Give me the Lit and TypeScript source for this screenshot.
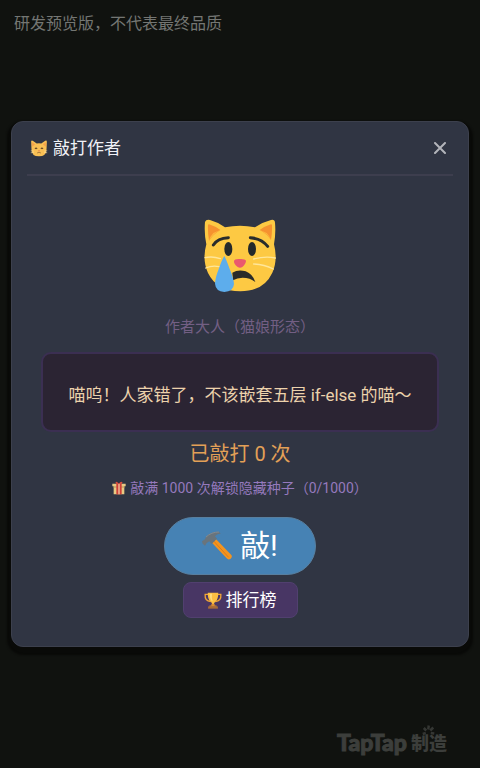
import { LitElement, html, css, svg } from "lit";
import { customElement, state } from "lit/decorators.js";

const GOAL = 1000;

const catIcon = html`<svg class="icon-cat" viewBox="0 0 54 52" aria-hidden="true">
  <path d="M3 3Q5 0 9 3L20 11Q27 9 34 11L46 2Q51 0 51 5L50 29Q49 50 27 50Q4 50 4 28Z" fill="#f9c055"/>
  <path d="M6 7L15 13L6 21ZM48 7L39 13L48 21Z" fill="#f5a04a"/>
  <path d="M15 27Q18 23 21 27M33 27Q36 23 39 27" fill="none" stroke="#6b4a24" stroke-width="4"/>
  <path d="M24 32H30L27 36Z" fill="#e0604e"/>
  <path d="M21 39Q24 41 27 37Q30 41 33 39" fill="none" stroke="#8a6230" stroke-width="2"/>
  <path d="M2 33L11 34M2 39L11 38M52 33L43 34M52 39L43 38" stroke="#ffe3a0" stroke-width="2"/>
</svg>`;

const cryingCat = html`<svg class="face" viewBox="42 40 216 222" role="img" aria-label="哭泣的猫">
  <path d="M45 49Q48 40 60 43Q83 49 105 65Q150 56 195 65Q218 49 243 43Q254 40 255 51Q258 83 252 116Q264 164 247 201Q221 257 151 257Q81 257 54 202Q36 163 49 116Q42 83 45 49Z" fill="#fdc943"/>
  <path d="M54 58Q55 54 61 57Q78 62 91 73Q70 85 57 105Q53 81 54 58ZM246 58Q245 54 239 57Q222 62 209 73Q232 85 243 103Q247 81 246 58Z" fill="#f5922f"/>
  <path d="M70 82L90 73Q70 85 57 105Q60 92 70 82ZM230 82L210 73Q232 85 243 103Q240 92 230 82Z" fill="#fdb63d"/>
  <path d="M70 118Q83 97 115 96M181 96Q215 99 233 122" fill="none" stroke="#292c2c" stroke-width="9" stroke-linecap="round"/>
  <ellipse cx="115" cy="130" rx="12" ry="21" fill="#24292b"/>
  <ellipse cx="186" cy="130" rx="12" ry="21" fill="#24292b"/>
  <path d="M132 166Q133 159 149 160Q165 159 168 165Q168 174 157 184Q150 189 143 184Q131 175 132 166Z" fill="#ea596e"/>
  <path d="M45 156Q68 151 91 159M47 187Q67 178 88 183M191 160Q226 151 256 157M191 175Q223 177 250 190" fill="none" stroke="#ffe69a" stroke-width="4" stroke-linecap="round"/>
  <path d="M127 201Q145 190 167 197Q188 205 196 229Q180 216 158 216Q141 216 129 224Z" fill="#292b29"/>
  <path d="M103 151Q110 164 119 190Q131 218 132 235Q130 258 103 259Q77 257 75 234Q76 215 86 191Q95 163 103 151Z" fill="#5dadec"/>
</svg>`;

const giftIcon = html`<svg class="icon-gift" viewBox="0 0 42 40" aria-hidden="true">
  <path d="M1 7H41V15H37V39H5V15H1Z" fill="#e8ca83"/>
  <path d="M5 15H37V19H5Z" fill="#c9a263"/>
  <path d="M13 7H29V39H13Z" fill="#cf4038"/>
  <path d="M19 8H23V39H19Z" fill="#f3c9a0"/>
  <path d="M20 8Q9 9 11 3Q14-2 20 7Q28-2 31 3Q33 9 20 8Z" fill="#dc5040"/>
</svg>`;

const hammerIcon = html`<svg class="icon-hammer" viewBox="0 0 90 90" aria-hidden="true">
  <path d="M27 32L38 20L88 72Q92 78 86 83Q79 88 74 82Z" fill="#f4941f"/>
  <path d="M34 29L80 79" stroke="#d97d1b" stroke-width="3"/>
  <path d="M2 38L0 31L9 25L12 17Q28 1 51 2L56 8Q43 9 39 16L45 23L29 39L22 31L14 36L9 44Z" fill="#69747c"/>
  <path d="M12 18Q28 3 51 3" fill="none" stroke="#818a91" stroke-width="3"/>
</svg>`;

const trophyIcon = html`<svg class="icon-trophy" viewBox="0 0 54 52" aria-hidden="true">
  <path d="M13 7H3Q1 28 20 29M41 7H51Q53 28 34 29" fill="none" stroke="#f0a436" stroke-width="4"/>
  <path d="M11 2H43Q43 23 35 29Q29 32 29 42H25Q25 32 19 29Q11 23 11 2Z" fill="#fcbf43"/>
  <path d="M17 5H24Q22 17 26 29Q17 24 17 5Z" fill="#ffdc7c"/>
  <path d="M22 36H32V41H38V45H16V41H22Z" fill="#d98c31"/>
  <path d="M12 44H42V51H12Z" fill="#a96b36"/>
</svg>`;

const rays = [
  [12, 9, 13, 1],
  [16, 11, 22, 5],
  [8, 11, 3, 6],
  [17, 16, 24, 17],
  [7, 16, 1, 18],
];

@customElement("app-root")
export class AppRoot extends LitElement {
  static styles = css`
    :host {
      display: block;
      color: #f0f1f6;
      font-family: Roboto, "Noto Sans CJK SC", sans-serif;
    }
    * {
      box-sizing: border-box;
    }
    .screen {
      min-height: 100vh;
      display: grid;
      grid-template-rows: 1fr auto 1fr;
      padding: 0 11px;
      background: #10120f;
    }
    .notice {
      margin: 0;
      padding: 12px 3px;
      font-size: 16px;
      line-height: 24px;
      color: #747673;
    }
    .card {
      padding: 0 15px 28px;
      border: 1px solid #3c404d;
      border-radius: 12px;
      background: #303543;
      box-shadow: 0 4px 2px 4px #090a08;
    }
    .header {
      display: flex;
      align-items: center;
      justify-content: space-between;
      height: 54px;
      border-bottom: 2px solid #3d3e4e;
      padding: 0 3px;
    }
    h1 {
      display: flex;
      align-items: center;
      gap: 5px;
      margin: 0;
      font-size: 17px;
      line-height: 24px;
      font-weight: 400;
    }
    button {
      font-family: inherit;
      cursor: pointer;
    }
    svg {
      display: block;
      flex: none;
    }
    .icon-cat,
    .icon-trophy {
      width: 18px;
      height: 17px;
    }
    .close {
      padding: 4px;
      border: 0;
      background: none;
    }
    .close svg {
      width: 12px;
      height: 12px;
    }
    .body {
      display: flex;
      flex-direction: column;
      align-items: center;
      padding: 43px 14px 0;
    }
    .face {
      width: 72px;
      height: 74px;
    }
    p {
      margin: 0;
    }
    .name {
      margin-top: 22px;
      font-size: 15px;
      line-height: 24px;
      color: #735f84;
    }
    .speech {
      align-self: stretch;
      margin-top: 13px;
      padding: 29px 8px 23px;
      border: 2px solid #3b2f52;
      border-radius: 10px;
      background: #2b2433;
      font-size: 17px;
      line-height: 24px;
      text-align: center;
      color: #ecd2ac;
    }
    .count {
      margin-top: 8px;
      font-size: 20px;
      line-height: 28px;
      color: #e3a057;
    }
    .hint {
      display: flex;
      align-items: center;
      gap: 4px;
      margin-top: 8px;
      font-size: 14px;
      line-height: 24px;
      color: #9579bd;
    }
    .icon-gift {
      width: 14px;
      height: 14px;
    }
    .hit {
      display: flex;
      align-items: center;
      gap: 8px;
      margin-top: 17px;
      height: 58px;
      padding: 0 37px;
      border: 1px solid #587f9f;
      border-radius: 29px;
      background: #4682b4;
      font-size: 30px;
      line-height: 40px;
      color: #fff;
    }
    .icon-hammer {
      width: 30px;
      height: 30px;
    }
    .board {
      display: flex;
      align-items: center;
      gap: 4px;
      margin-top: 7px;
      height: 36px;
      padding: 0 20px;
      border: 1px solid #51406f;
      border-radius: 8px;
      background: #483664;
      font-size: 17px;
      line-height: 24px;
      color: #fff;
    }
    .brand {
      display: flex;
      align-self: end;
      justify-self: end;
      align-items: center;
      gap: 4px;
      padding: 0 22px 12px 0;
      font-size: 23px;
      line-height: 28px;
      font-weight: 900;
      font-family: Lato, sans-serif;
      color: #3c3e3b;
      -webkit-text-stroke: 1px #3c3e3b;
    }
    .make {
      position: relative;
      font-family: "Noto Sans CJK SC", sans-serif;
      font-size: 18px;
      -webkit-text-stroke: 0;
    }
    .spark {
      position: absolute;
      top: -3px;
      left: 11px;
      width: 13px;
      height: 10px;
    }
  `;

  @state() private hits = 0;
  @state() private open = true;

  render() {
    return html`<main class="screen">
      <p class="notice">研发预览版，不代表最终品质</p>
      ${this.open ? this.card() : html`<div></div>`}
      <div class="brand">
        <span>TapTap</span>
        <span class="make">制造<svg class="spark" viewBox="0 0 25 20" aria-hidden="true">
          ${rays.map(([a, b, c, d]) => svg`<path d="M${a} ${b}L${c} ${d}" stroke="#343633" stroke-width="5"/>`)}
        </svg></span>
      </div>
    </main>`;
  }

  private card() {
    return html`<section class="card" role="dialog" aria-labelledby="title">
      <header class="header">
        <h1 id="title">${catIcon}敲打作者</h1>
        <button class="close" aria-label="关闭" @click=${() => (this.open = false)}>
          <svg viewBox="0 0 12 12"><path d="M1 1L11 11M11 1L1 11" stroke="#b2b4ba" stroke-width="2" stroke-linecap="round"/></svg>
        </button>
      </header>
      <div class="body">
        ${cryingCat}
        <p class="name">作者大人（猫娘形态）</p>
        <p class="speech">喵呜！人家错了，不该嵌套五层 if-else 的喵～</p>
        <p class="count">已敲打 ${this.hits} 次</p>
        <p class="hint">${giftIcon}<span>敲满 ${GOAL} 次解锁隐藏种子（${this.hits}/${GOAL}）</span></p>
        <button class="hit" @click=${() => this.hits++}>${hammerIcon}<span>敲!</span></button>
        <button class="board">${trophyIcon}<span>排行榜</span></button>
      </div>
    </section>`;
  }
}
